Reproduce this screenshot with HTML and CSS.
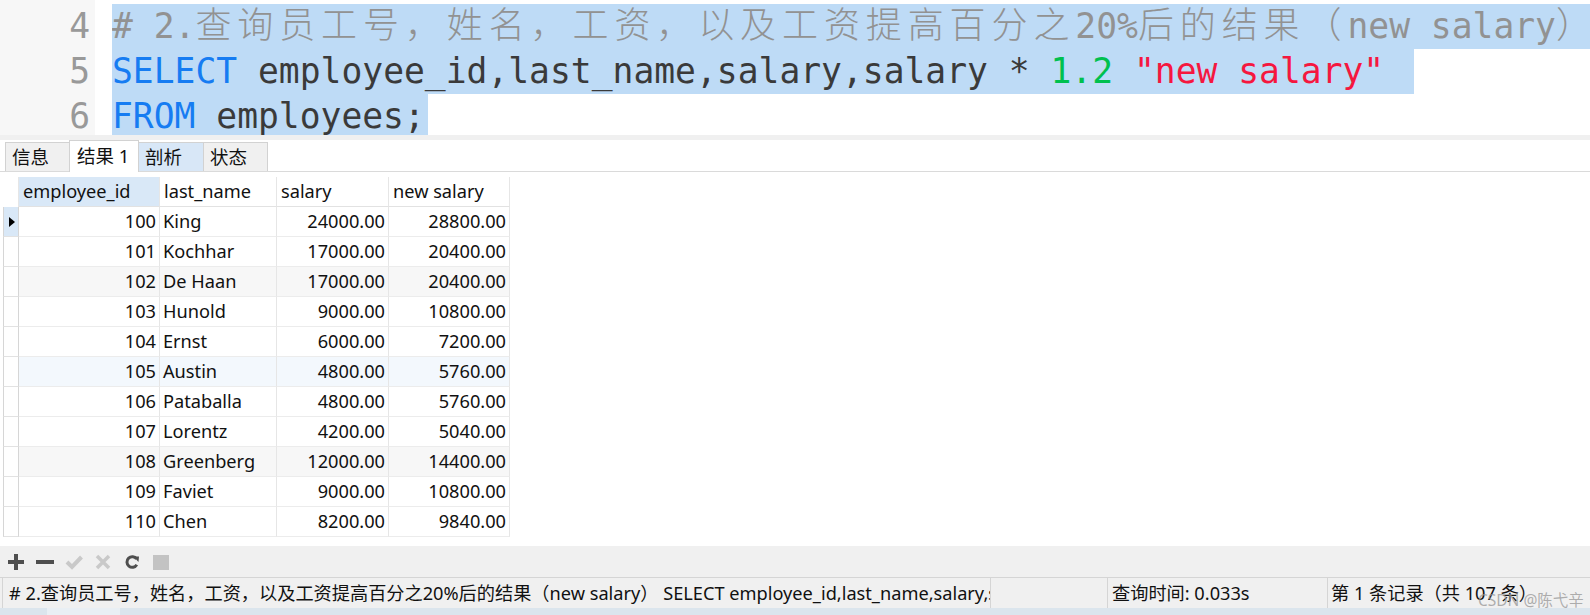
FILE: index.html
```html
<!DOCTYPE html>
<html lang="zh-CN">
<head>
<meta charset="utf-8">
<title>SQLyog</title>
<link rel="stylesheet" href="styles.css">
</head>
<body>
<div class="editor">
  <div class="gutter">
    <div>4</div>
    <div>5</div>
    <div>6</div>
  </div>
  <div class="code">
    <div class="line"><span class="sel fill"><span class="com"># 2.<span class="cjk">查询员工号，姓名，工资，以及工资提高百分之</span>20%<span class="cjk">后的结果（</span>new salary<span class="cjk">）</span></span></span></div>
    <div class="line"><span class="sel s5"><span class="kw">SELECT</span> <span class="id">employee_id,last_name,salary,salary *</span> <span class="num">1.2</span> <span class="str">"new salary"</span></span></div>
    <div class="line"><span class="sel s6"><span class="kw">FROM</span> <span class="id">employees;</span></span></div>
  </div>
</div>
<div class="sep"></div>
<div class="tabs">
  <div class="tab t1">信息</div>
  <div class="tab t2 active">结果 1</div>
  <div class="tab t3 hover">剖析</div>
  <div class="tab t4">状态</div>
</div>
<div class="results">
  <div class="grid">
    <div class="row head">
      <div class="ind blank"></div>
      <div class="cell hsel">employee_id</div>
      <div class="cell">last_name</div>
      <div class="cell">salary</div>
      <div class="cell">new salary</div>
    </div>
    <div class="row">
      <div class="ind cur"><svg width="6" height="10" viewBox="0 0 6 10"><path d="M0 0L6 5L0 10Z" fill="#000"/></svg></div>
      <div class="cell r">100</div><div class="cell">King</div><div class="cell r">24000.00</div><div class="cell r">28800.00</div>
    </div>
    <div class="row">
      <div class="ind"></div>
      <div class="cell r">101</div><div class="cell">Kochhar</div><div class="cell r">17000.00</div><div class="cell r">20400.00</div>
    </div>
    <div class="row alt">
      <div class="ind"></div>
      <div class="cell r">102</div><div class="cell">De Haan</div><div class="cell r">17000.00</div><div class="cell r">20400.00</div>
    </div>
    <div class="row">
      <div class="ind"></div>
      <div class="cell r">103</div><div class="cell">Hunold</div><div class="cell r">9000.00</div><div class="cell r">10800.00</div>
    </div>
    <div class="row">
      <div class="ind"></div>
      <div class="cell r">104</div><div class="cell">Ernst</div><div class="cell r">6000.00</div><div class="cell r">7200.00</div>
    </div>
    <div class="row hov">
      <div class="ind"></div>
      <div class="cell r">105</div><div class="cell">Austin</div><div class="cell r">4800.00</div><div class="cell r">5760.00</div>
    </div>
    <div class="row">
      <div class="ind"></div>
      <div class="cell r">106</div><div class="cell">Pataballa</div><div class="cell r">4800.00</div><div class="cell r">5760.00</div>
    </div>
    <div class="row">
      <div class="ind"></div>
      <div class="cell r">107</div><div class="cell">Lorentz</div><div class="cell r">4200.00</div><div class="cell r">5040.00</div>
    </div>
    <div class="row alt">
      <div class="ind"></div>
      <div class="cell r">108</div><div class="cell">Greenberg</div><div class="cell r">12000.00</div><div class="cell r">14400.00</div>
    </div>
    <div class="row">
      <div class="ind"></div>
      <div class="cell r">109</div><div class="cell">Faviet</div><div class="cell r">9000.00</div><div class="cell r">10800.00</div>
    </div>
    <div class="row">
      <div class="ind"></div>
      <div class="cell r">110</div><div class="cell">Chen</div><div class="cell r">8200.00</div><div class="cell r">9840.00</div>
    </div>
  </div>
</div>
<div class="toolbar">
  <svg class="ic" width="18" height="18" viewBox="0 0 18 18"><path d="M9 1v16M1 9h16" stroke="#4f4f4f" stroke-width="4"/></svg>
  <svg class="ic" width="18" height="18" viewBox="0 0 18 18"><path d="M0 9h18" stroke="#4f4f4f" stroke-width="4"/></svg>
  <svg class="ic" width="18" height="18" viewBox="0 0 18 18"><path d="M2 9l5 5L16.5 4" stroke="#c9c9c9" stroke-width="4" fill="none"/></svg>
  <svg class="ic" width="18" height="18" viewBox="0 0 18 18"><path d="M3 3l12 12M15 3L3 15" stroke="#c9c9c9" stroke-width="3.5"/></svg>
  <svg class="ic" width="18" height="18" viewBox="0 0 18 18"><path d="M13.6 6A5.3 5.3 0 1 0 13.8 11.8" stroke="#4f4f4f" stroke-width="3" fill="none"/><path d="M10.5 3.5L16 3.5L15.5 9Z" fill="#4f4f4f"/></svg>
  <svg class="ic" width="18" height="18" viewBox="0 0 18 18"><rect x="1" y="2" width="16" height="15" fill="#c3c3c3"/></svg>
</div>
<div class="status">
  <div class="panel p1"># 2.查询员工号，姓名，工资，以及工资提高百分之20%后的结果（new salary） SELECT employee_id,last_name,salary,salary * 1.2 "new salary" FROM employees;</div>
  <div class="panel p2"></div>
  <div class="panel p3">查询时间: 0.033s</div>
  <div class="panel p4">第 1 条记录（共 107 条）</div>
  <div class="watermark">CSDN @陈弋辛</div>
</div>
<div class="strip"></div>
</body>
</html>
```
FILE: styles.css
```css
* { box-sizing: border-box; }
html, body { margin: 0; padding: 0; }
body {
  width: 1590px;
  height: 615px;
  overflow: hidden;
  background: #fff;
  font-family: "Noto Sans", "Noto Sans CJK SC", sans-serif;
  color: #111;
}

/* editor */
.editor {
  display: flex;
  height: 135px;
  overflow: hidden;
  background: #fff;
}
.gutter {
  width: 95px;
  flex: none;
  background: #f7f7f7;
  padding-top: 4px;
  padding-right: 5px;
  text-align: right;
  font-family: "DejaVu Sans Mono", monospace;
  font-size: 34.65px;
  color: #999;
}
.gutter div { height: 45px; line-height: 45px; }
.code {
  flex: 1;
  min-width: 0;
  padding-left: 17px;
  padding-top: 4px;
  font-family: "DejaVu Sans Mono", monospace;
  font-size: 34.65px;
}
.line { height: 45px; line-height: 45px; overflow: hidden; white-space: pre; }
.sel { background: #bedbf6; display: inline-block; height: 45px; vertical-align: top; }
.sel.fill { display: block; }
.s5 { padding-right: 30px; }
.s6 { padding-right: 3px; }
.com { color: #929292; }
.cjk {
  font-family: "Noto Sans CJK SC", sans-serif;
  font-size: 36px;
  letter-spacing: 5.9px;
  line-height: 1;
  font-weight: 300;
}
.kw { color: #167cf2; }
.id { color: #3a3a3a; }
.num { color: #00c04e; }
.str { color: #f5173f; }

.sep { height: 5px; background: #f0f0f0; }

/* tabs */
.tabs {
  height: 32px;
  display: flex;
  align-items: flex-end;
  padding-left: 5px;
  border-bottom: 1px solid #dadada;
  background: #fff;
}
.tab {
  height: 29px;
  border: 1px solid #d2d2d2;
  border-bottom: none;
  background: #f0f0f0;
  font-size: 18.5px;
  line-height: 27px;
  padding-left: 6px;
  white-space: nowrap;
}
.t1 { width: 65px; }
.t2 { width: 70px; margin-left: -1px; }
.t3 { width: 66px; margin-left: -1px; }
.t4 { width: 65px; margin-left: -1px; }
.tab.active {
  height: 32px;
  margin-bottom: -1px;
  background: #fff;
  line-height: 30px;
  padding-left: 7px;
  position: relative;
}
.tab.hover { background: #d8e7f7; }

/* results grid */
.results { height: 374px; background: #fff; overflow: hidden; }
.grid {
  margin: 5px 0 0 3px;
  width: max-content;
  font-size: 18.2px;
}
.row {
  display: grid;
  grid-template-columns: 16px 141px 117px 112px 121px;
  height: 30px;
}
.cell {
  border-right: 1px solid #e6e6e6;
  border-bottom: 1px solid #ececec;
  padding: 0 3px 0 3px;
  line-height: 29px;
  white-space: nowrap;
  overflow: hidden;
}
.r { text-align: right; }
.ind {
  border-left: 1px solid #d6d6d6;
  border-right: 1px solid #d6d6d6;
  border-bottom: 1px solid #e2e2e2;
  background: #fff;
  display: flex;
  align-items: center;
  justify-content: center;
}
.ind.blank { border: none; border-right: 1px solid #e6e6e6; }
.ind.cur { background: #d9e8f7; padding-left: 2px; }
.head .cell { padding-left: 4px; border-bottom-color: #e2e2e2; }
.head .hsel { background: #d9e8f7; }
.alt .cell { background: #f7f7f7; }
.hov .cell { background: #f3f8fd; }

/* toolbar */
.toolbar {
  height: 31px;
  background: #f0f0f0;
  display: flex;
  align-items: center;
  padding-left: 7px;
  gap: 11px;
}
.ic { flex: none; }

/* status */
.status {
  position: relative;
  height: 31px;
  background: #f0f0f0;
  border-top: 1px solid #d5d5d5;
  display: flex;
  padding-left: 2px;
  font-size: 18.2px;
}
.panel {
  border-left: 1px solid #d5d5d5;
  height: 30px;
  line-height: 30px;
  white-space: nowrap;
  overflow: hidden;
  padding-left: 6px;
  color: #111;
}
.p1 { width: 988px; }
.p2 { width: 117px; }
.p3 { width: 220px; padding-left: 4px; }
.p4 { flex: 1; padding-left: 3px; }
.watermark {
  position: absolute;
  left: 1478px;
  top: 10px;
  font-size: 15.5px;
  line-height: 24px;
  color: rgba(150, 150, 150, 0.75);
  white-space: nowrap;
}

.strip {
  height: 7px;
  background: linear-gradient(to right, #dbe5ed 0, #dbe5ed 47px, #e9eff4 47px, #e9eff4 120px, #dbe5ed 120px);
}
```
